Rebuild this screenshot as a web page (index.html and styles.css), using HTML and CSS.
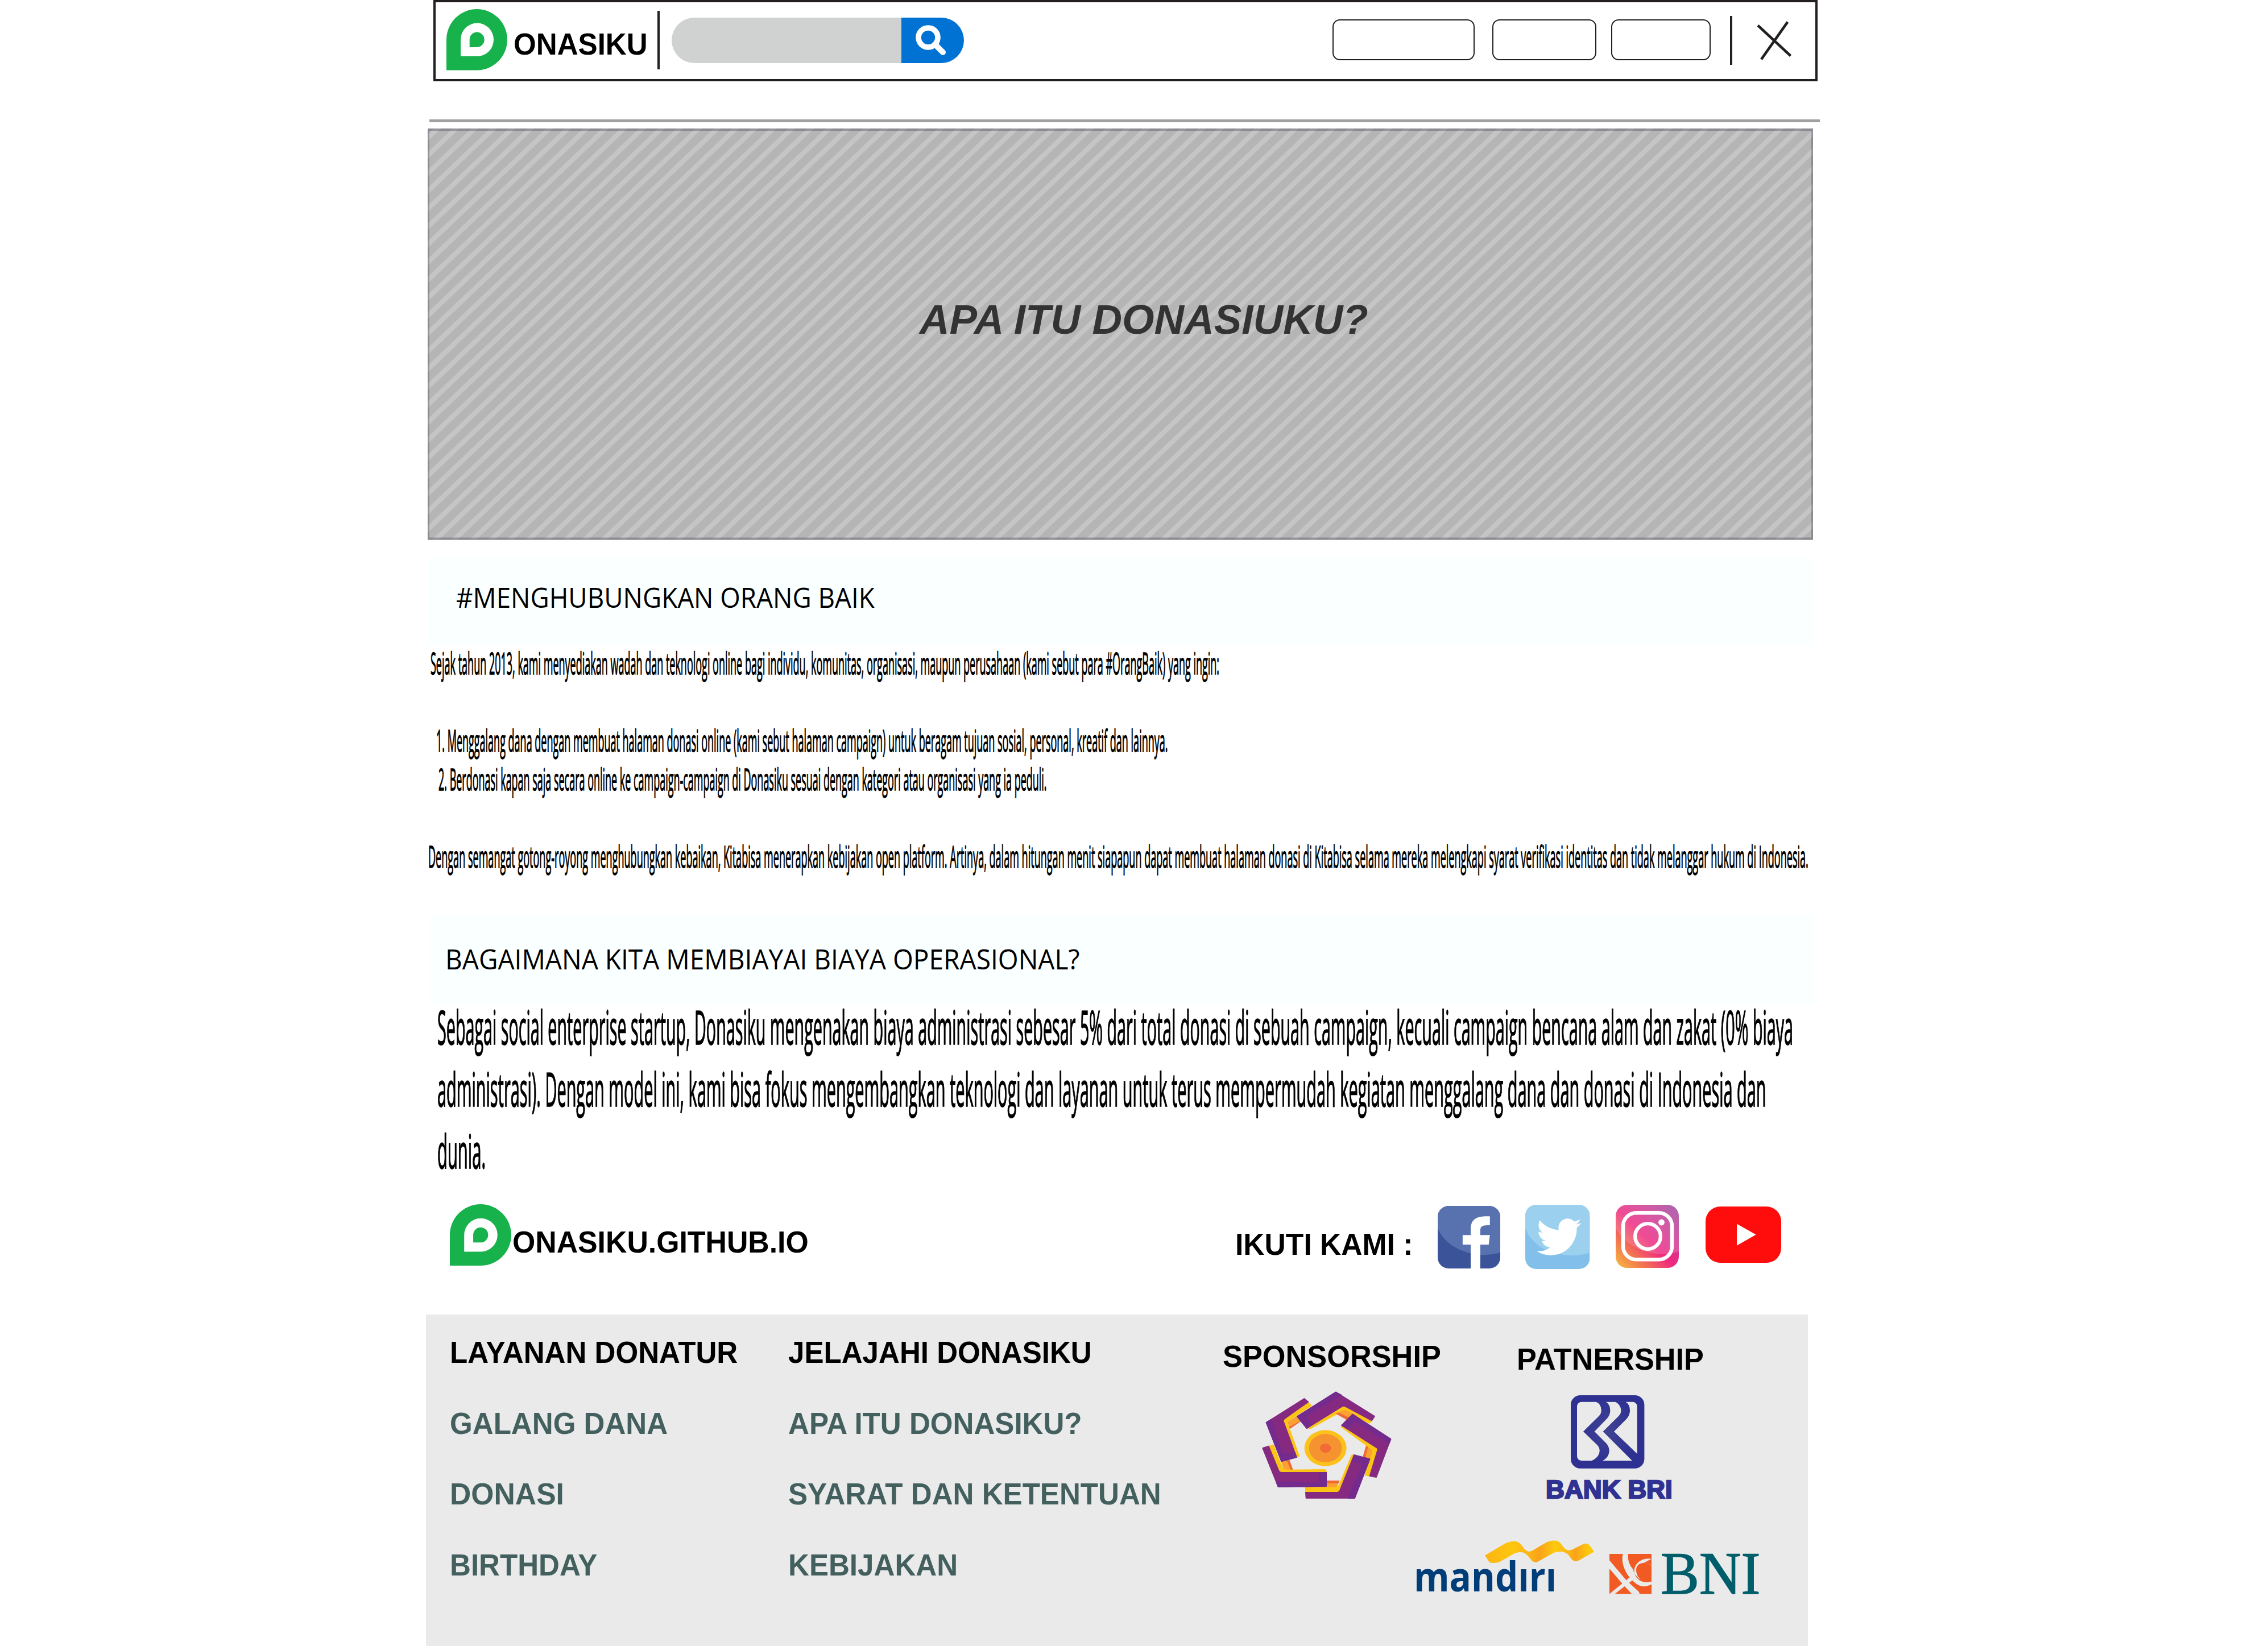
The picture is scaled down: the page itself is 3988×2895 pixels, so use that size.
FILE: index.html
```html
<!DOCTYPE html>
<html lang="id">
<head>
<meta charset="utf-8">
<title>Donasiku</title>
<link rel="stylesheet" href="styles.css">
</head>
<body>
<div class="page">
  <header class="header">
    <svg class="header-logo" viewBox="0 0 107 107.5" preserveAspectRatio="none">
      <path fill="#17b24b" d="M0 107.5V53.7A53.5 53.7 0 1 1 53.5 107.5Z"/>
      <path fill="#fff" d="M25 83V54A29 29.2 0 1 1 54 83Z"/>
      <path fill="#17b24b" d="M40.7 67V54A13 13.2 0 1 1 53.7 67Z"/>
    </svg>
    <div class="header-name"><span class="fit">ONASIKU</span></div>
    <div class="header-divider"></div>
    <div class="search">
      <div class="search-field"></div>
      <div class="search-button">
        <svg class="search-icon" viewBox="0 0 60 60">
          <circle cx="24" cy="24" r="17" fill="none" stroke="#fff" stroke-width="9.6"/>
          <path d="M36 36L50 50" stroke="#fff" stroke-width="10" stroke-linecap="round"/>
        </svg>
      </div>
    </div>
    <nav class="nav">
      <div class="nav-item nav-item-a"></div>
      <div class="nav-item nav-item-b"></div>
      <div class="nav-item nav-item-c"></div>
    </nav>
    <div class="header-divider header-divider-short"></div>
    <svg class="close" viewBox="0 0 64 71">
      <path d="M3 8.7L60.6 62.3M55.3 2.7L9 68.3" stroke="#231f20" stroke-width="4.6"/>
    </svg>
  </header>

  <div class="rule"></div>

  <section class="banner">
    <svg class="banner-stripes" viewBox="0 0 2436 723.5">
      <rect width="2436" height="723.5" fill="#b5b5b5"/>
      <path d="M-21.8 361.75H3210" transform="skewX(-46.34)" stroke="#c5c5c5" stroke-width="723.5" stroke-dasharray="12.4 20.4"/>
      <path d="M0 0H2436V723.5H0ZM3 4V719.5H2433V4Z" fill="#463c50" fill-opacity=".36" fill-rule="evenodd"/>
    </svg>
    <h1 class="fit">APA ITU DONASIUKU?</h1>
  </section>

  <section class="heading heading-about"><h2 class="fit">#MENGHUBUNGKAN ORANG BAIK</h2></section>

  <section class="about">
    <p class="fit about-lead">Sejak tahun 2013, kami menyediakan wadah dan teknologi online bagi individu, komunitas, organisasi, maupun perusahaan (kami sebut para #OrangBaik) yang ingin:</p>
    <div class="about-list">
      <p class="fit about-one">1. Menggalang dana dengan membuat halaman donasi online (kami sebut halaman campaign) untuk beragam tujuan sosial, personal, kreatif dan lainnya.</p>
      <p class="fit about-two">2. Berdonasi kapan saja secara online ke campaign-campaign di Donasiku sesuai dengan kategori atau organisasi yang ia peduli.</p>
    </div>
    <p class="fit about-close">Dengan semangat gotong-royong menghubungkan kebaikan, Kitabisa menerapkan kebijakan open platform. Artinya, dalam hitungan menit siapapun dapat membuat halaman donasi di Kitabisa selama mereka melengkapi syarat verifikasi identitas dan tidak melanggar hukum di Indonesia.</p>
  </section>

  <section class="heading heading-cost"><h2 class="fit">BAGAIMANA KITA MEMBIAYAI BIAYA OPERASIONAL?</h2></section>

  <section class="cost">
    <p class="fit cost-a">Sebagai social enterprise startup, Donasiku mengenakan biaya administrasi sebesar 5% dari total donasi di sebuah campaign, kecuali campaign bencana alam dan zakat (0% biaya</p>
    <p class="fit cost-b">administrasi). Dengan model ini, kami bisa fokus mengembangkan teknologi dan layanan untuk terus mempermudah kegiatan menggalang dana dan donasi di Indonesia dan</p>
    <p class="fit cost-c">dunia.</p>
  </section>

  <section class="social">
    <svg class="social-logo" viewBox="0 0 107 107.5" preserveAspectRatio="none">
      <path fill="#17b24b" d="M0 107.5V53.7A53.5 53.7 0 1 1 53.5 107.5Z"/>
      <path fill="#fff" d="M25 83V54A29 29.2 0 1 1 54 83Z"/>
      <path fill="#17b24b" d="M40.7 67V54A13 13.2 0 1 1 53.7 67Z"/>
    </svg>
    <div class="social-site"><span class="fit">ONASIKU.GITHUB.IO</span></div>
    <div class="social-follow"><span class="fit">IKUTI KAMI :</span></div>
    <svg class="icon-facebook" viewBox="574 93 163 330" preserveAspectRatio="none">
      <defs><clipPath id="fb"><rect x="574" y="93" width="163" height="330" rx="29" ry="57"/></clipPath></defs>
      <g clip-path="url(#fb)">
        <rect x="574" y="93" width="163" height="330" fill="#3b5499"/>
        <path fill="#5872b0" d="M574 93H737V338Q715 352 690 351C640 348 590 295 574 210Z"/>
      </g>
      <path fill="#fff" d="M660 423V297H639V247H660V212Q660 150 697 148H710V195H702Q685 196 685 217V247H710L707 297H685V423Z"/>
    </svg>
    <svg class="icon-twitter" viewBox="801 87 168 339" preserveAspectRatio="none">
      <defs><clipPath id="tw"><rect x="801" y="87" width="168" height="339" rx="29" ry="57"/></clipPath></defs>
      <g clip-path="url(#tw)">
        <rect x="801" y="87" width="168" height="339" fill="#82c0eb"/>
        <path fill="#9bd0ef" d="M801 87H969V340Q945 355 920 353C860 350 820 300 801 212Z"/>
      </g>
      <path fill="#fff" transform="translate(831 137.7) scale(4.83 9.9)" d="M23.953 4.57a10 10 0 01-2.825.775 4.958 4.958 0 002.163-2.723c-.951.555-2.005.959-3.127 1.184a4.92 4.92 0 00-8.384 4.482C7.69 8.095 4.067 6.13 1.64 3.162a4.822 4.822 0 00-.666 2.475c0 1.71.87 3.213 2.188 4.096a4.904 4.904 0 01-2.228-.616v.06a4.923 4.923 0 003.946 4.827 4.996 4.996 0 01-2.212.085 4.936 4.936 0 004.604 3.417 9.867 9.867 0 01-6.102 2.105c-.39 0-.779-.023-1.17-.067a13.995 13.995 0 007.557 2.209c9.053 0 13.998-7.496 13.998-13.985 0-.21 0-.42-.015-.63A9.935 9.935 0 0024 4.59z"/>
    </svg>
    <svg class="icon-instagram" viewBox="0 0 111 111">
      <defs>
        <linearGradient id="ig" x1="0" y1="1" x2="1" y2="0">
          <stop offset="0" stop-color="#f7bd40"/><stop offset=".22" stop-color="#f37a4e"/>
          <stop offset=".48" stop-color="#ee2880"/><stop offset=".72" stop-color="#cc3a93"/><stop offset="1" stop-color="#964a9e"/>
        </linearGradient>
        <clipPath id="igc"><rect width="111" height="111" rx="20"/></clipPath>
      </defs>
      <g clip-path="url(#igc)">
        <rect width="111" height="111" fill="url(#ig)"/>
        <path fill="#fff" fill-opacity=".16" d="M0 0H111V82Q98 87 82 87C45 86 12 66 0 41Z"/>
      </g>
      <rect x="13" y="14.2" width="86" height="82" rx="23" fill="none" stroke="#fff" stroke-width="6.5"/>
      <circle cx="56.5" cy="55.5" r="22.4" fill="none" stroke="#fff" stroke-width="6.3"/>
      <circle cx="80.5" cy="31" r="5.4" fill="#fff"/>
    </svg>
    <svg class="icon-youtube" viewBox="0 0 133 99">
      <rect width="133" height="99" rx="26" fill="#ff0d0d"/>
      <path d="M55 30.5L88.6 49.5L55 68.7Z" fill="#fff"/>
    </svg>
  </section>

  <footer class="footer">
    <div class="links links-donor">
      <h3 class="fit">LAYANAN DONATUR</h3>
      <a class="fit">GALANG DANA</a>
      <a class="fit link-donasi">DONASI</a>
      <a class="fit">BIRTHDAY</a>
    </div>
    <div class="links links-explore">
      <h3 class="fit">JELAJAHI DONASIKU</h3>
      <a class="fit">APA ITU DONASIKU?</a>
      <a class="fit">SYARAT DAN KETENTUAN</a>
      <a class="fit">KEBIJAKAN</a>
    </div>
    <div class="sponsor">
      <h3 class="fit">SPONSORSHIP</h3>
      <svg class="sponsor-logo" viewBox="0 0 810 660" stroke-linejoin="round" stroke-width="6">
        <g fill="#fdc513" stroke="#fdc513">
          <path d="M304 246L487 130L633 208L625 219L490 148L312 247Z"/>
        </g>
        <path fill="#f9a133" d="M460 164Q488 145 504 152L560 180L530 190L505 195Z"/>
        <path fill="#f26a31" d="M445 168L462 163L520 192L503 202Z"/>
        <path fill="#862a81" stroke="#862a81" d="M243 184L447 56L651 183L636 205L500 132Q490 124 478 132L294 246Z"/>

        <path fill="#f26a31" d="M607 334L622 342L602 404L588 400Z"/>
        <path fill="#f9a133" d="M618 340L650 358L630 410L602 403Z"/>
        <path fill="#fdc513" stroke="#fdc513" d="M478 238L646 342L667 355L624 497L602 493L644 362L480 241Z"/>
        <path fill="#fdc513" d="M476 240L640 354L668 352L480 226Z"/>
        <path fill="#862a81" stroke="#862a81" d="M535 173L736 303L660 504L626 498L667 362Q670 352 660 347L478 231Z"/>
        <path fill="#742b8e" stroke="#742b8e" d="M535 173L736 303L728 325L560 211Q548 203 540 212L512 245L478 231Z"/>

        <path fill="#f26a31" d="M395 522H467L460 538H395Z"/>
        <path fill="#f9a133" d="M285 537H460L450 560H285Z"/>
        <path fill="#fdc513" d="M285 557H440Q456 557 463 543L525 395Q530 383 542 384L560 390L475 590H285Z"/>
        <path fill="#862a81" stroke="#862a81" d="M543 388L625 409L546 614H290L288 585H455Q464 583 468 575Z"/>
        <path fill="#742b8e" stroke="#742b8e" d="M543 388L625 409L546 614H513L590 438Q592 430 585 428L537 416Z"/>

        <path fill="#f26a31" d="M183 413L202 413L221 465H200Z"/>
        <path fill="#f9a133" d="M157 418L187 413L208 466H172Z"/>
        <path fill="#fdc513" d="M92 339L118 331L165 450Q171 464 186 464L388 462Q397 463 399 478V484H150Z"/>
        <path fill="#862a81" stroke="#862a81" d="M61 351L92 341L145 470Q150 480 162 480H396V551L143 555Z"/>
        <path fill="#742b8e" stroke="#742b8e" d="M134 532L350 537Q362 537 362 526V480H396V551L143 555Z"/>

        <path fill="#f26a31" d="M198 238L262 205L262 210L204 250Z"/>
        <path fill="#f9a133" d="M190 212L245 178L262 206L201 238Z"/>
        <path fill="#fdc513" d="M300 108L322 127L200 205Q190 212 194 222L255 390Q254 398 242 401L160 205Z"/>
        <path fill="#862a81" stroke="#862a81" d="M280 90L301 107L175 196Q167 202 170 210L239 399L160 420L80 216Z"/>
        <path fill="#742b8e" stroke="#742b8e" d="M80 216L106 200L160 378Q163 386 172 385L230 374L239 399L160 420Z"/>

        <path fill="#862a81" d="M242 184L447 56L480 70L400 180L294 246Z"/>
        <path fill="#742b8e" stroke="#742b8e" d="M243 184L447 56L472 70L292 177Q285 182 290 189L318 228L294 246Z"/>
        <ellipse cx="392" cy="351" rx="111" ry="95" fill="#fdc11c"/>
        <ellipse cx="392" cy="351" rx="87" ry="75" fill="#f59331"/>
        <ellipse cx="392" cy="351" rx="29" ry="24" fill="#f26a36"/>
      </svg>
    </div>
    <div class="partners">
      <h3 class="fit">PATNERSHIP</h3>
      <svg class="bri-logo" viewBox="187 42 388 386" preserveAspectRatio="none">
        <defs><radialGradient id="bri" gradientUnits="userSpaceOnUse" cx="381" cy="225" r="180">
          <stop offset="0" stop-color="#404293"/><stop offset="1" stop-color="#2e3192"/>
        </radialGradient></defs>
        <rect x="187" y="42" width="388" height="386" rx="50" fill="#2e3192"/>
        <rect x="220" y="77" width="317" height="310" rx="24" fill="#eaeaea"/>
        <path fill="url(#bri)" d="M318 76H371Q395 90 395 124Q394 148 378 165L312 233L372 293Q390 312 390 337Q388 370 355 388H296Q338 368 339 335Q339 316 325 303L253 233L332 155Q348 141 348 122Q348 88 318 76Z"/>
        <path fill="url(#bri)" d="M420 76H475Q499 90 499 124Q498 150 480 168L415 233L538 352V388H511L357 233L436 155Q452 141 452 122Q450 90 420 76Z"/>
      </svg>
      <div class="bri-name"><span class="fit">BANK BRI</span></div>
      <div class="banks">
        <div class="mandiri">
          <svg class="mandiri-wave" viewBox="697 1040 284 120" preserveAspectRatio="none">
            <defs><linearGradient id="mw">
              <stop offset="0" stop-color="#fdb415"/><stop offset=".25" stop-color="#fec60d"/><stop offset=".38" stop-color="#fdb813"/>
              <stop offset=".5" stop-color="#faa21b"/><stop offset=".64" stop-color="#fdca0c"/><stop offset=".76" stop-color="#fdb813"/>
              <stop offset=".83" stop-color="#faa21b"/><stop offset=".95" stop-color="#fdc90c"/>
            </linearGradient></defs>
            <path fill="url(#mw)" d="M697 1118L752 1056Q765 1046 775 1048Q787 1050 794 1072Q803 1098 811 1099Q818 1099 828 1086L856 1054Q868 1043 878 1044Q891 1044 898 1068Q906 1091 915 1093Q922 1093 930 1084L951 1063Q962 1054 969 1067L981 1100L942 1142Q932 1152 924 1140L914 1115Q905 1098 892 1099Q880 1099 870 1111L836 1148Q828 1158 820 1146L808 1118Q799 1100 787 1102Q777 1103 768 1115L735 1151Q722 1160 709 1153Z"/>
          </svg>
          <div class="mandiri-name"><span class="fit">mandırı</span></div>
        </div>
        <svg class="bni-mark" viewBox="390 880 222 211" preserveAspectRatio="none">
          <rect x="390" y="880" width="222" height="211" fill="#f15a22"/>
          <g fill="#eaeaea">
            <path d="M390 914L480 1020L545 1079L550 1091H508L468 1048L390 958Z"/>
            <path d="M461 880H488Q483 925 515 962Q530 1030 590 1029L612 1026V1040Q570 1062 535 1040Q495 1012 472 965Q451 920 461 880Z"/>
            <path d="M612 906Q560 898 532 935Q517 955 521 985L545 1010L612 1027V942Q595 927 572 927Z"/>
            <path d="M390 1091L498 1003L515 1016L418 1091Z"/>
          </g>
          <path fill="#f15a22" d="M612 943Q595 927 572 927Q530 930 531 968Q537 1030 612 1026Z"/>
        </svg>
        <div class="bni-name"><span class="fit">BNI</span></div>
      </div>
    </div>
  </footer>
</div>
</body>
</html>
```
FILE: styles.css
```css
* { box-sizing: border-box; }
body {
  margin: 0;
  background: #fff;
  color: #000;
  font-family: "Liberation Sans", Arial, sans-serif;
  overflow: hidden;
}
h1, h2, h3, p { margin: 0; }
svg { display: block; flex: none; overflow: visible; }

.page {
  width: 2452px;
  height: 2895px;
  margin-left: 749px;
  overflow: hidden;
}

/* One-line text, squeezed horizontally to its column */
.fit {
  display: block;
  width: max-content;
  white-space: nowrap;
  transform: scaleX(var(--squeeze, 1));
  transform-origin: 0 50%;
}

/* Header */
.header {
  display: flex;
  align-items: flex-start;
  width: 2434px;
  height: 142.5px;
  margin-left: 13px;
  border: 4px solid #231f20;
}
.header-logo { width: 107px; height: 107.5px; margin: 12px 0 0 19px; }
.header-name {
  --squeeze: .9641;
  flex: none;
  width: 236px;
  margin: 44px 0 0 10.6px;
  font: bold 53px/60px "Liberation Sans", Arial, sans-serif;
}
.header-divider {
  flex: none;
  width: 4px;
  height: 103px;
  margin: 15px 0 0 17.4px;
  background: #231f20;
}
.search {
  display: flex;
  flex: none;
  width: 514px;
  height: 80.5px;
  margin: 26.5px 0 0 21px;
  border-radius: 40px;
  overflow: hidden;
}
.search-field { width: 404px; background: #d0d2d1; }
.search-button { flex: 1; padding: 11px 0 0 23px; background: #0072d3; }
.search-icon { width: 60px; height: 60px; }
.nav { display: flex; margin: 29.5px 0 0 648px; }
.nav-item { height: 72.5px; border: 2.4px solid #231f20; border-radius: 13px; }
.nav-item-a { width: 250px; }
.nav-item-b { width: 183px; margin-left: 31px; }
.nav-item-c { width: 175px; margin-left: 26px; }
.header-divider-short { height: 86px; margin: 23.5px 0 0 34.5px; }
.close { width: 64px; height: 71px; margin: 32px 0 0 42px; }

.rule { width: 2445px; height: 4.5px; margin: 67.8px 0 0 6px; background: #9fa1a0; }

/* Banner: striped artwork with the title stacked on top */
.banner {
  --squeeze: .9975;
  display: grid;
  width: 2436px;
  height: 723.5px;
  margin: 11.5px 0 0 2.5px;
  overflow: hidden;
  color: #333;
}
.banner-stripes { grid-area: 1 / 1; width: 2436px; height: 723.5px; overflow: hidden; }
.banner h1 {
  grid-area: 1 / 1;
  margin: 296px 0 0 865px;
  font: italic bold 73px/80px "Liberation Sans", Arial, sans-serif;
}

/* Section headings */
.heading { background: #faffff; }
.heading h2 { font: 49px/60px "Open Sans", "Noto Sans", sans-serif; }
.heading-about {
  --squeeze: .9327;
  width: 2434px;
  height: 154px;
  margin: 30px 0 0 4px;
  padding: 40.5px 0 0 49.4px;
}
.heading-cost {
  --squeeze: .9403;
  width: 2432px;
  height: 155px;
  margin: 69.5px 0 0 8px;
  padding: 46px 0 0 25.7px;
}

/* Body copy: heavier outline keeps the narrow stems solid */
.about, .cost { opacity: .999; }
.about .fit { -webkit-text-stroke: 1.3px #000; }
.cost .fit { -webkit-text-stroke: 1.6px #000; }

.about { margin-top: -1.5px; font: 53px/68px "Open Sans", "Noto Sans", sans-serif; }
.about-lead { --squeeze: .3397; margin-left: 8px; }
.about-list { margin: 67.5px 0 68.5px 17.6px; }
.about-one { --squeeze: .3396; }
.about-two { --squeeze: .3388; margin-left: 4.4px; }
.about-close { --squeeze: .3406; margin-left: 3.7px; }

.cost { margin: -13.5px 0 0 19.7px; font: 83px/108.7px "Open Sans", "Noto Sans", sans-serif; }
.cost-a { --squeeze: .3461; }
.cost-b { --squeeze: .3482; }
.cost-c { --squeeze: .3527; }

/* Site name and social links */
.social {
  display: flex;
  align-items: flex-start;
  height: 194px;
  margin: 40.4px 0 0 42.2px;
  font: bold 53px/60px "Liberation Sans", Arial, sans-serif;
}
.social-logo { width: 108px; height: 108px; }
.social-site { --squeeze: .9771; flex: none; width: 522px; margin: 37.5px 0 0 1.5px; }
.social-follow { --squeeze: .9737; flex: none; width: 312px; margin: 41.5px 0 0 749.5px; }
.icon-facebook { width: 110px; height: 110px; margin: 3px 0 0 44px; }
.icon-twitter { width: 113.5px; height: 113px; margin: 1px 0 0 43.5px; }
.icon-instagram { width: 111px; height: 111px; margin: 1px 0 0 46px; }
.icon-youtube { width: 133px; height: 99px; margin: 4px 0 0 47px; }

/* Footer */
.footer {
  display: flex;
  align-items: flex-start;
  width: 2430px;
  height: 583px;
  padding-left: 41.5px;
  background: #eaeaea;
  font: bold 53px/60px "Liberation Sans", Arial, sans-serif;
}
.footer h3 { font: inherit; }
.links {
  --squeeze: .964;
  display: flex;
  flex: none;
  flex-direction: column;
  gap: 64.5px;
  padding-top: 37.5px;
}
.links a { color: #43605f; }
.links-donor { width: 595px; }
.links-explore { width: 764px; }
.link-donasi { --squeeze: .975; }
.sponsor { --squeeze: .9873; flex: none; width: 335.5px; padding-top: 44.5px; }
.sponsor-logo { width: 270px; height: 220px; margin: 13.5px 0 0 50px; }
.partners { flex: none; width: 640px; padding-top: 49.5px; }
.partners h3 { --squeeze: .9855; margin-left: 181.8px; }
.bri-logo { width: 129.4px; height: 128.7px; margin: 32.5px 0 0 277.3px; }
.bri-name {
  --squeeze: 1.012;
  margin: 13px 0 0 232.5px;
  color: #2f3292;
  font-size: 45px;
  line-height: 50px;
  -webkit-text-stroke: 2.5px #2f3292;
}
.banks { display: flex; align-items: flex-start; margin-top: 62.5px; }
.mandiri { flex: none; width: 318px; }
.mandiri-wave { width: 192px; height: 42.5px; margin-left: 126.3px; }
.mandiri-name {
  --squeeze: .8852;
  margin: -19.5px 0 0 .5px;
  color: #003d79;
  font: bold 72px/80px "Open Sans", "Noto Sans", sans-serif;
}
.bni-mark { width: 74px; height: 70.5px; margin: 25px 0 0 27px; }
.bni-name {
  --squeeze: .97;
  margin: 10px 0 0 16px;
  color: #005e6a;
  font: 105px/100px "Liberation Serif", "Times New Roman", serif;
  -webkit-text-stroke: 1.4px #005e6a;
}
```
